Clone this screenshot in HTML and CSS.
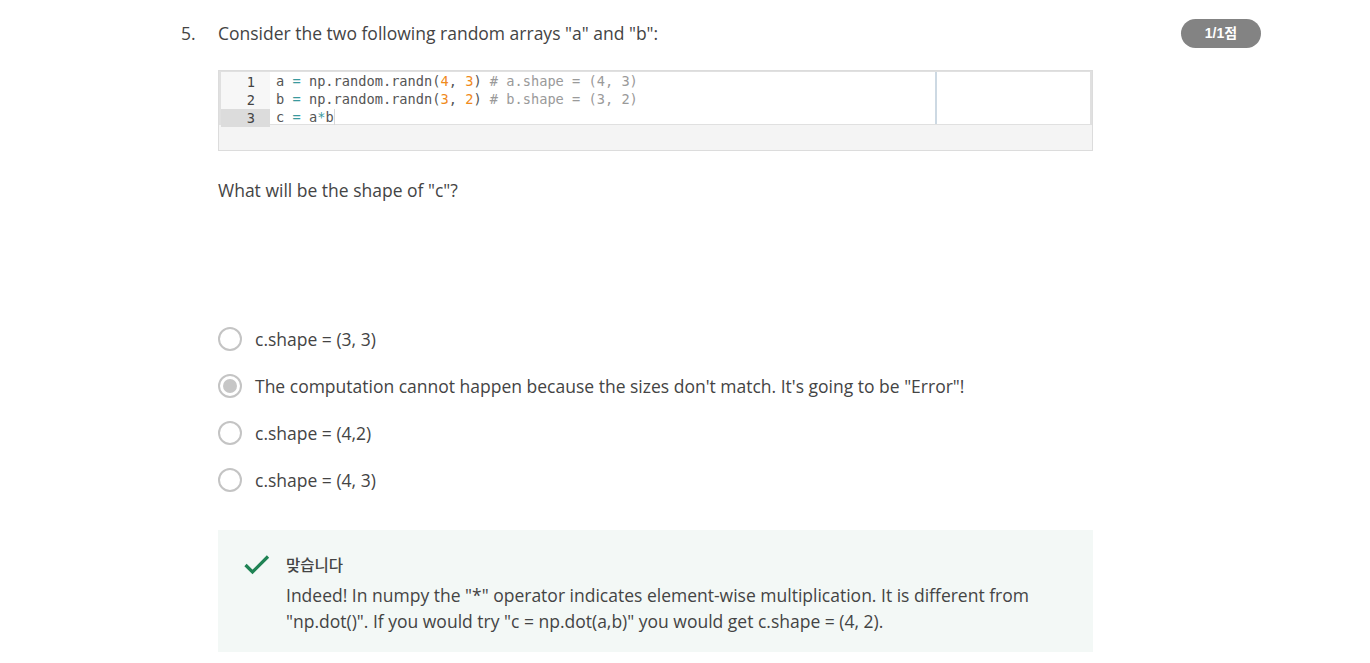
FILE: index.html
```html
<!DOCTYPE html>
<html lang="ko">
<head>
<meta charset="utf-8">
<link rel="stylesheet" href="styles.css">
</head>
<body>
<div class="page">
  <div class="question">
    <div class="qnum">5.</div>
    <div class="qbody">
      <div class="qtitle">Consider the two following random arrays "a" and "b":</div>
      <div class="code">
        <div class="editor">
          <div class="gutter">
            <div class="ln">1</div>
            <div class="ln">2</div>
            <div class="ln active">3</div>
          </div>
          <div class="lines">
            <div class="line">a <span class="op">=</span> np.random.randn(<span class="num">4</span>, <span class="num">3</span>) <span class="cm"># a.shape = (4, 3)</span></div>
            <div class="line">b <span class="op">=</span> np.random.randn(<span class="num">3</span>, <span class="num">2</span>) <span class="cm"># b.shape = (3, 2)</span></div>
            <div class="line">c <span class="op">=</span> a<span class="op">*</span>b<span class="cursor"></span></div>
          </div>
          <div class="ruler"></div>
        </div>
        <div class="codefoot"></div>
      </div>
      <div class="prompt">What will be the shape of "c"?</div>
      <div class="options">
        <div class="opt"><span class="radio"></span><span>c.shape = (3, 3)</span></div>
        <div class="opt"><span class="radio checked"></span><span>The computation cannot happen because the sizes don't match. It's going to be "Error"!</span></div>
        <div class="opt"><span class="radio"></span><span>c.shape = (4,2)</span></div>
        <div class="opt"><span class="radio"></span><span>c.shape = (4, 3)</span></div>
      </div>
      <div class="feedback">
        <svg class="check" width="28" height="24" viewBox="0 0 28 24"><path d="M2.5 13 L9.5 20 L25 4.5" fill="none" stroke="#1f8354" stroke-width="3.2"/></svg>
        <div class="fbtext">
          <div class="fbtitle">맞습니다</div>
          <div class="fbbody">Indeed! In numpy the "*" operator indicates element-wise multiplication. It is different from "np.dot()". If you would try "c = np.dot(a,b)" you would get c.shape = (4, 2).</div>
        </div>
      </div>
    </div>
    <div class="badge">1/1점</div>
  </div>
</div>
</body>
</html>
```

FILE: styles.css
```css
html, body {
  margin: 0;
  padding: 0;
  background: #fff;
}
body {
  font-family: "Open Sans", "Noto Sans CJK KR", sans-serif;
  color: #3f3f3f;
}
.page {
  padding: 20px 0 0 181px;
}
.question {
  display: flex;
  align-items: flex-start;
}
.qnum {
  width: 37px;
  flex: 0 0 37px;
  font-size: 17.5px;
  line-height: 26px;
  color: #444;
}
.qbody {
  flex: 0 0 875px;
  width: 875px;
}
.qtitle {
  font-size: 17.5px;
  line-height: 26px;
  color: #444;
}
.badge {
  margin-left: 88px;
  margin-top: -1px;
  width: 80px;
  height: 29px;
  border-radius: 15px;
  background: #838383;
  color: #fff;
  font-family: "Liberation Sans", "Noto Sans CJK KR", sans-serif;
  font-weight: bold;
  font-size: 14px;
  line-height: 29px;
  text-align: center;
}
.code {
  margin-top: 24px;
  border: 1px solid #dcdcdc;
  background: #f4f4f4;
}
.editor {
  position: relative;
  display: flex;
  background: #fff;
  border: 2px solid #e0e0e0;
  border-top-width: 1px;
  border-bottom-width: 1px;
  height: 52px;
}
.gutter {
  width: 49px;
  background: #f7f7f7;
  padding-top: 1px;
}
.ln {
  font-family: "DejaVu Sans Mono", monospace;
  font-size: 13.67px;
  line-height: 18px;
  height: 18px;
  text-align: right;
  padding-right: 15px;
  color: #444;
}
.ln.active {
  background: #dcdcdc;
}
.lines {
  padding: 0 0 0 6px;
}
.line {
  font-family: "DejaVu Sans Mono", monospace;
  font-size: 13.67px;
  line-height: 18px;
  height: 18px;
  color: #555;
  white-space: pre;
}
.op { color: #3a9a9e; }
.num { color: #f08a1c; }
.cm { color: #9a9a9a; }
.cursor {
  display: inline-block;
  width: 1px;
  height: 16px;
  background: #d8d8d8;
  vertical-align: -3px;
}
.ruler {
  position: absolute;
  left: 714px;
  top: 0;
  bottom: 0;
  width: 2px;
  background: #cdd9e3;
}
.codefoot {
  height: 25px;
}
.prompt {
  margin-top: 26px;
  font-size: 17.5px;
  line-height: 26px;
  color: #444;
}
.options {
  margin-top: 123px;
  display: flex;
  flex-direction: column;
  gap: 21px;
}
.opt {
  display: flex;
  align-items: center;
  gap: 13px;
  font-size: 17.5px;
  line-height: 26px;
  color: #444;
}
.radio {
  box-sizing: border-box;
  width: 24px;
  height: 24px;
  border: 2px solid #c4c4c4;
  border-radius: 50%;
  flex: 0 0 24px;
  position: relative;
}
.radio.checked::after {
  content: "";
  position: absolute;
  left: 3px;
  top: 3px;
  width: 14px;
  height: 14px;
  border-radius: 50%;
  background: #c6c6c6;
}
.feedback {
  margin-top: 37px;
  background: #f3f8f6;
  display: flex;
  align-items: flex-start;
  padding: 22px 40px 18px 25px;
}
.check {
  flex: 0 0 28px;
}
.fbtext {
  margin-left: 15px;
}
.fbtitle {
  font-family: "Noto Sans CJK KR", sans-serif;
  font-size: 15.5px;
  line-height: 24px;
  color: #444;
  font-weight: 500;
}
.fbbody {
  margin-top: 6px;
  font-size: 17.5px;
  line-height: 26px;
  color: #444;
}
```
